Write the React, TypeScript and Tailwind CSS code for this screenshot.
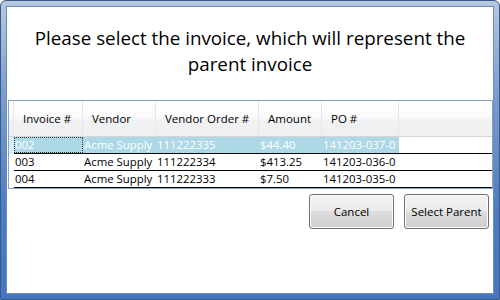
import React from "react";

const font = { fontFamily: '"Open Sans", "Noto Sans", sans-serif' };

type Row = { inv: string; vendor: string; vo: string; amt: string; po: string };

const rows: Row[] = [
  { inv: "002", vendor: "Acme Supply", vo: "111222335", amt: "$44.40", po: "141203-037-0" },
  { inv: "003", vendor: "Acme Supply", vo: "111222334", amt: "$413.25", po: "141203-036-0" },
  { inv: "004", vendor: "Acme Supply", vo: "111222333", amt: "$7.50", po: "141203-035-0" },
];

function HeaderCell({ label, w }: { label: string; w: string }) {
  return (
    <div className={`${w} h-full shrink-0 flex items-center pl-[9px] border-r border-[#e3e6ea] text-[11.5px] text-black whitespace-nowrap`}>
      {label}
    </div>
  );
}

function Btn({ label }: { label: string }) {
  return (
    <div className="w-[85px] h-[35px] rounded-[3px] border border-[#707070] bg-[linear-gradient(to_bottom,#f3f3f3_0%,#ebebeb_50%,#dddddd_50%,#cfcfcf_100%)] shadow-[inset_0_0_0_1px_#fcfcfc] flex items-center justify-center text-[11.5px] text-black">
      {label}
    </div>
  );
}

export default function App() {
  return (
    <div
      style={font}
      className="w-[500px] h-[300px] rounded-t-[6px] border border-[#3a5a86] bg-[linear-gradient(to_bottom,#b7c8df_0%,#7d9fd0_30%,#4d7cc3_70%,#4676c0_100%)] p-[5px]"
    >
      <div className="h-full w-full border border-[#6d8bb5] bg-white flex flex-col">
        <div className="h-[93px] shrink-0 pt-[18px] text-center text-[18.8px] leading-[26px] text-black">
          Please select the invoice, which will represent the
          <br />
          parent invoice
        </div>
        <div className="ml-[1px] w-[485px] h-[89px] border border-[#8aa3c4] flex flex-col">
          <div className="h-[36px] shrink-0 flex border-b border-[#d5d5d5] bg-[linear-gradient(to_bottom,#ffffff_0%,#fbfbfc_45%,#f1f2f4_55%,#eeeff1_100%)]">
            <div className="w-[5px] h-full shrink-0 border-r border-[#e3e6ea]" />
            <HeaderCell label="Invoice #" w="w-[69px]" />
            <HeaderCell label="Vendor" w="w-[73px]" />
            <HeaderCell label="Vendor Order #" w="w-[103px]" />
            <HeaderCell label="Amount" w="w-[63px]" />
            <HeaderCell label="PO #" w="w-[77px]" />
            <div className="flex-1" />
          </div>
          {rows.map((r, i) => {
            const sel = i === 0;
            return (
              <div key={r.inv} className="h-[17px] shrink-0 flex text-[11.4px] leading-[16px] whitespace-nowrap">
                <div className={`w-[5px] h-full shrink-0 ${sel ? "bg-[#dbeef5]" : "bg-white"}`} />
                <div className="flex-1 flex border-b border-black">
                  <div className={`flex ${sel ? "bg-[#add8e6] text-white" : "text-black"}`}>
                    <div className={`w-[69px] shrink-0 pl-[1px] ${sel ? "outline outline-1 outline-dotted outline-[#333] -outline-offset-1" : ""}`}>{r.inv}</div>
                    <div className="w-[73px] shrink-0 pl-[1px]">{r.vendor}</div>
                    <div className="w-[103px] shrink-0 pl-[1px]">{r.vo}</div>
                    <div className="w-[63px] shrink-0 pl-[1px]">{r.amt}</div>
                    <div className="w-[77px] shrink-0 pl-[1px]">{r.po}</div>
                  </div>
                </div>
              </div>
            );
          })}
        </div>
        <div className="mt-[5px] pr-[4px] flex justify-end gap-[10px]">
          <Btn label="Cancel" />
          <Btn label="Select Parent" />
        </div>
      </div>
    </div>
  );
}
